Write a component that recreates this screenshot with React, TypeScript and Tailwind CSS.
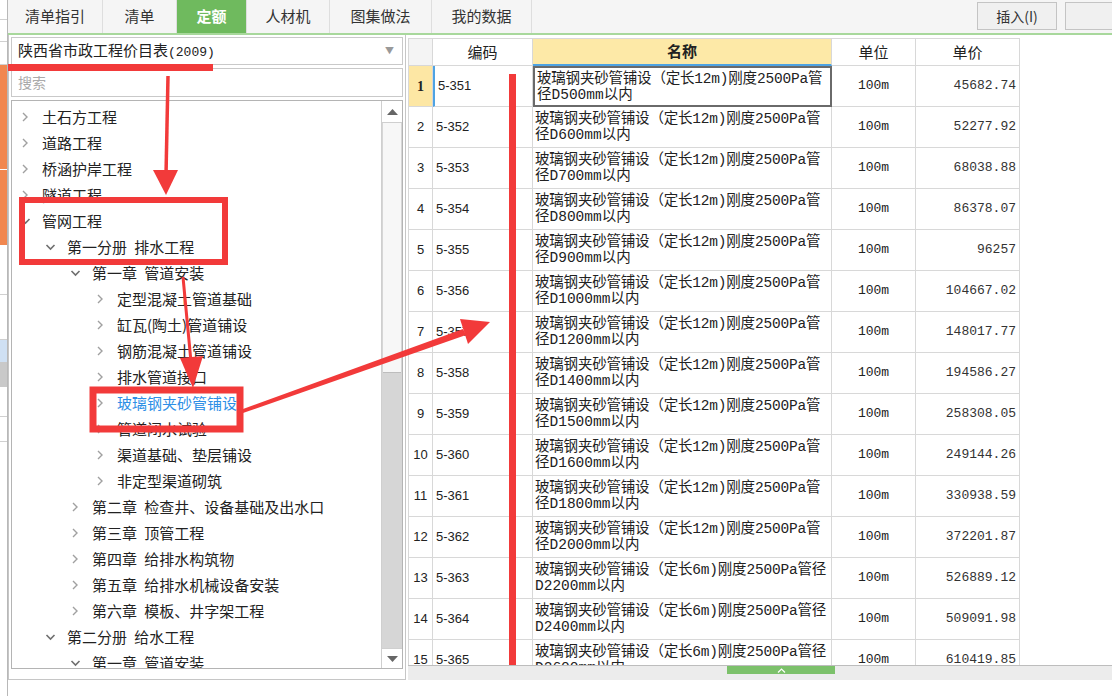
import React from "react";

type TreeItem = {
  level: 0 | 1 | 2 | 3;
  open: boolean;
  label: string;
  active?: boolean;
};

const tree: TreeItem[] = [
  { level: 0, open: false, label: "土石方工程" },
  { level: 0, open: false, label: "道路工程" },
  { level: 0, open: false, label: "桥涵护岸工程" },
  { level: 0, open: false, label: "隧道工程" },
  { level: 0, open: true, label: "管网工程" },
  { level: 1, open: true, label: "第一分册 排水工程" },
  { level: 2, open: true, label: "第一章 管道安装" },
  { level: 3, open: false, label: "定型混凝土管道基础" },
  { level: 3, open: false, label: "缸瓦(陶土)管道铺设" },
  { level: 3, open: false, label: "钢筋混凝土管道铺设" },
  { level: 3, open: false, label: "排水管道接口" },
  { level: 3, open: false, label: "玻璃钢夹砂管铺设", active: true },
  { level: 3, open: false, label: "管道闭水试验" },
  { level: 3, open: false, label: "渠道基础、垫层铺设" },
  { level: 3, open: false, label: "非定型渠道砌筑" },
  { level: 2, open: false, label: "第二章 检查井、设备基础及出水口" },
  { level: 2, open: false, label: "第三章 顶管工程" },
  { level: 2, open: false, label: "第四章 给排水构筑物" },
  { level: 2, open: false, label: "第五章 给排水机械设备安装" },
  { level: 2, open: false, label: "第六章 模板、井字架工程" },
  { level: 1, open: true, label: "第二分册 给水工程" },
  { level: 2, open: true, label: "第一章 管道安装" },
];

const indent = ["pl-[8px]", "pl-[33px]", "pl-[58px]", "pl-[83px]"];

type Row = { no: number; code: string; line1: string; line2: string; price: string };

const long12 = "玻璃钢夹砂管铺设（定长12m)刚度2500Pa管";
const long6 = "玻璃钢夹砂管铺设（定长6m)刚度2500Pa管径";

const rows: Row[] = [
  { no: 1, code: "5-351", line1: long12, line2: "径D500mm以内", price: "45682.74" },
  { no: 2, code: "5-352", line1: long12, line2: "径D600mm以内", price: "52277.92" },
  { no: 3, code: "5-353", line1: long12, line2: "径D700mm以内", price: "68038.88" },
  { no: 4, code: "5-354", line1: long12, line2: "径D800mm以内", price: "86378.07" },
  { no: 5, code: "5-355", line1: long12, line2: "径D900mm以内", price: "96257" },
  { no: 6, code: "5-356", line1: long12, line2: "径D1000mm以内", price: "104667.02" },
  { no: 7, code: "5-357", line1: long12, line2: "径D1200mm以内", price: "148017.77" },
  { no: 8, code: "5-358", line1: long12, line2: "径D1400mm以内", price: "194586.27" },
  { no: 9, code: "5-359", line1: long12, line2: "径D1500mm以内", price: "258308.05" },
  { no: 10, code: "5-360", line1: long12, line2: "径D1600mm以内", price: "249144.26" },
  { no: 11, code: "5-361", line1: long12, line2: "径D1800mm以内", price: "330938.59" },
  { no: 12, code: "5-362", line1: long12, line2: "径D2000mm以内", price: "372201.87" },
  { no: 13, code: "5-363", line1: long6, line2: "D2200mm以内", price: "526889.12" },
  { no: 14, code: "5-364", line1: long6, line2: "D2400mm以内", price: "509091.98" },
  { no: 15, code: "5-365", line1: long6, line2: "D2600mm以内", price: "610419.85" },
];

const tabs = [
  { label: "清单指引", w: "w-[95px]" },
  { label: "清单", w: "w-[74px]" },
  { label: "定额", w: "w-[70px]", active: true },
  { label: "人材机", w: "w-[83px]" },
  { label: "图集做法", w: "w-[102px]" },
  { label: "我的数据", w: "w-[100px]" },
];

const Chevron = ({ open }: { open: boolean }) =>
  open ? (
    <svg width="11" height="10" viewBox="0 0 11 10">
      <polyline points="1.5,3 5.5,7 9.5,3" fill="none" stroke="#6f6f6f" strokeWidth="1.6" />
    </svg>
  ) : (
    <svg width="11" height="10" viewBox="0 0 11 10">
      <polyline points="3,1 7,5 3,9" fill="none" stroke="#a0a0a0" strokeWidth="1.4" />
    </svg>
  );

const LeftStrip = () => (
  <div className="w-[8px] h-full flex flex-col border-r border-[#b8b8b8] bg-white">
    <div className="h-[20px] border-b border-[#d0d0d0]" />
    <div className="h-[22px] border-b border-[#d0d0d0]" />
    <div className="h-[23px] border-b border-[#d0d0d0]" />
    <div className="h-[105px] bg-[#f1874f] border-b border-white" />
    <div className="h-[75px] bg-[#f1874f]" />
    <div className="h-[50px] border-b border-[#d0d0d0]" />
    <div className="h-[45px] border-b border-[#d0d0d0]" />
    <div className="h-[22px] bg-[#cfe0f3]" />
    <div className="h-[25px] bg-[#c9c9c9]" />
    <div className="h-[30px] border-b border-[#d0d0d0]" />
    <div className="h-[25px] border-b border-[#d0d0d0]" />
    <div className="flex-1" />
  </div>
);

const TabBar = () => (
  <div className="flex flex-col">
    <div className="flex h-[33px] bg-[#f5f5f5]">
      {tabs.map((t) => (
        <div
          key={t.label}
          className={`${t.w} flex items-center justify-center border-r border-[#dedede] text-[15px] ${
            t.active ? "bg-[#6fba5e] text-white font-bold" : "text-[#333]"
          }`}
        >
          {t.label}
        </div>
      ))}
      <div className="flex-1 flex items-start justify-end pt-[2px] gap-[8px]">
        <div className="w-[80px] h-[28px] border border-[#c4c4c4] bg-[#f0f0f0] flex items-center justify-center text-[14px] text-[#333]">
          插入(I)
        </div>
        <div className="w-[47px] h-[28px] border border-r-0 border-[#c4c4c4] bg-[#f0f0f0]" />
      </div>
    </div>
    <div className="h-[2px] bg-[#a8d89c]" />
  </div>
);

const TreePanel = () => (
  <div className="w-[398px] h-full flex flex-col px-[2px] pt-[2px] border-l border-r border-b border-[#c6c6c6]">
    <div className="h-[28px] border border-[#c9c9c9] bg-white flex items-center pl-[6px] pr-[8px]">
      <span className="flex-1 text-[15px] text-[#222]">
        陕西省市政工程价目表<span className="font-['Liberation_Mono'] text-[13px]">(2009)</span>
      </span>
      <span className="text-[#999] text-[9px]">▼</span>
    </div>
    <div className="mt-[3px] h-[29px] border border-[#c9c9c9] bg-white flex items-center pl-[6px] text-[14px] text-[#aaa]">
      搜索
    </div>
    <div className="mt-[3px] h-[569px] border border-[#b4b4b4] bg-white flex">
      <div className="flex-1 overflow-hidden pt-[3px]">
        {tree.map((it, i) => (
          <div key={i} className={`h-[26px] flex items-center ${indent[it.level]}`}>
            <span className="w-[22px] flex items-center">
              <Chevron open={it.open} />
            </span>
            <span
              className={`text-[15px] whitespace-nowrap [word-spacing:4px] ${
                it.active ? "text-[#2e8fe6]" : "text-[#222]"
              }`}
            >
              {it.label}
            </span>
          </div>
        ))}
      </div>
      <div className="w-[21px] flex flex-col border-l border-[#cfcfcf] bg-[#d6d6d6]">
        <div className="h-[22px] bg-white border-b border-[#cfcfcf] flex items-center justify-center">
          <svg width="11" height="6" viewBox="0 0 11 6">
            <polygon points="0,6 5.5,0 11,6" fill="#666" />
          </svg>
        </div>
        <div className="h-[250px] bg-[#f7f7f7] border-b border-[#bdbdbd] mx-[1px]" />
        <div className="flex-1" />
        <div className="h-[20px] bg-white border-t border-[#cfcfcf] flex items-center justify-center">
          <svg width="11" height="6" viewBox="0 0 11 6">
            <polygon points="0,0 11,0 5.5,6" fill="#666" />
          </svg>
        </div>
      </div>
    </div>
  </div>
);

const cellB = "border-r border-b border-[#d8d8d8]";

const Table = () => (
  <div className="flex-1 flex flex-col pl-[2px] pt-[3px] overflow-hidden">
    <div className="h-[627px] overflow-hidden">
      <div className="flex h-[28px] text-[15px] text-[#222]">
        <div className={`w-[25px] bg-[#f4f4f4] border-l border-t border-[#b0b0b0] ${cellB}`} />
        <div className={`w-[100px] border-t border-[#d8d8d8] flex items-center justify-center ${cellB}`}>编码</div>
        <div className="w-[299px] bg-[#fde9a7] border-t border-[#d8d8d8] border-r border-b-2 border-b-[#4ea3e3] flex items-center justify-center font-bold">
          名称
        </div>
        <div className={`w-[84px] border-t border-[#d8d8d8] flex items-center justify-center ${cellB}`}>单位</div>
        <div className={`w-[104px] border-t border-[#d8d8d8] flex items-center justify-center ${cellB}`}>单价</div>
      </div>
      {rows.map((r) => {
        const sel = r.no === 1;
        return (
          <div key={r.no} className="flex h-[41px] text-[#222]">
            <div
              className={`w-[25px] border-l border-[#b0b0b0] flex items-center justify-center font-['Liberation_Sans'] text-[13px] ${cellB} ${
                sel ? "bg-[#fde7a4] font-bold font-['Liberation_Serif'] text-[14px]" : "bg-white"
              }`}
            >
              {r.no}
            </div>
            <div
              className={`w-[100px] flex items-center pl-[3px] font-['Liberation_Sans'] text-[13px] ${cellB} ${
                sel ? "border-l-2 border-l-[#4ea3e3]" : ""
              }`}
            >
              {r.code}
            </div>
            <div
              className={`w-[299px] flex flex-col justify-center pl-[2px] font-['Liberation_Mono','Noto_Sans_CJK_SC',monospace] text-[14.5px] leading-[16px] ${
                sel ? "border-2 border-[#6a6a6a]" : cellB
              }`}
            >
              <span className="whitespace-nowrap tracking-[-0.2px]">{r.line1}</span>
              <span className="whitespace-nowrap">{r.line2}</span>
            </div>
            <div className={`w-[84px] flex items-center justify-center font-['Liberation_Mono'] text-[13px] ${cellB}`}>
              100m
            </div>
            <div className={`w-[104px] flex items-center justify-end pr-[3px] font-['Liberation_Mono'] text-[13px] text-[#333] ${cellB}`}>
              {r.price}
            </div>
          </div>
        );
      })}
    </div>
    <div className="h-[15px] bg-[#ececec] border-t border-[#bdbdbd] flex justify-start">
      <div className="ml-[319px] w-[108px] h-[8px] bg-[#7cc16b] flex items-center justify-center">
        <svg width="9" height="5" viewBox="0 0 9 5">
          <polyline points="1,4.5 4.5,1 8,4.5" fill="none" stroke="#fff" strokeWidth="1.2" />
        </svg>
      </div>
    </div>
  </div>
);

const Annotations = () => {
  const red = "#f23a3a";
  return (
    <svg className="absolute left-0 top-0 pointer-events-none" width="1112" height="696">
      <rect x="8" y="64" width="205" height="7" fill={red} />
      <line x1="168" y1="76" x2="166" y2="175" stroke={red} strokeWidth="3.5" />
      <polygon points="153,170 178,170 166,195" fill={red} />
      <rect x="22" y="200" width="203" height="62" fill="none" stroke={red} strokeWidth="6" />
      <line x1="183" y1="277" x2="191" y2="362" stroke={red} strokeWidth="3" />
      <polygon points="180,358 203,356 193,388" fill={red} />
      <rect x="93" y="390" width="147" height="39" fill="none" stroke={red} strokeWidth="7" />
      <polygon points="243,409 243,413 466,335 463,329" fill={red} />
      <polygon points="490,322 460,319 468,344" fill={red} />
      <rect x="509" y="74" width="7" height="591" fill={red} />
    </svg>
  );
};

export default function App() {
  return (
    <div className="relative w-[1112px] h-[696px] overflow-hidden bg-white font-['Noto_Sans_CJK_SC',sans-serif]">
      <div className="flex h-full">
        <LeftStrip />
        <div className="flex-1 flex flex-col">
          <TabBar />
          <div className="flex h-[645px]">
            <TreePanel />
            <Table />
          </div>
          <div className="flex-1 bg-white" />
        </div>
      </div>
      <Annotations />
    </div>
  );
}
